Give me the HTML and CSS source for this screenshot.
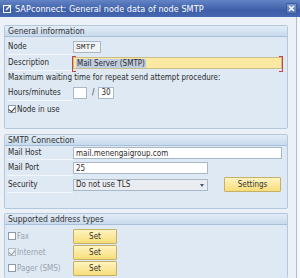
FILE: index.html
```html
<!DOCTYPE html>
<html>
<head>
<meta charset="utf-8">
<link rel="stylesheet" href="styles.css">
</head>
<body>
<div class="window">
  <div class="titlebar">
    <svg class="ticon" width="9" height="9" viewBox="0 0 9 9"><rect x="0.5" y="1.5" width="7" height="7" fill="none" stroke="#fff" stroke-width="1"/><path d="M3 6 L8 1" stroke="#fff" stroke-width="1.2"/></svg>
    <span class="ttext">SAPconnect: General node data of node SMTP</span>
    <span class="close"><svg width="7" height="7" viewBox="0 0 7 7"><path d="M1 1 L6 6 M6 1 L1 6" stroke="#fff" stroke-width="1.5"/></svg></span>
  </div>
  <div class="content">
    <div class="group g1">
      <div class="ghead">General information</div>
      <div class="gbody">
        <div class="row r-node">
          <span class="label">Node</span>
          <span class="field ro">SMTP</span>
        </div>
        <div class="row r-desc">
          <span class="label">Description</span>
          <span class="field yellow req"><span class="sel">Mail Server (SMTP)</span></span>
        </div>
        <div class="textline">Maximum waiting time for repeat send attempt procedure:</div>
        <div class="row r-hours">
          <span class="label">Hours/minutes</span>
          <span class="field small"></span>
          <span class="slash">/</span>
          <span class="field min">30</span>
        </div>
        <div class="checkrow"><span class="cb on"></span><span>Node in use</span></div>
      </div>
    </div>
    <div class="group g2">
      <div class="ghead">SMTP Connection</div>
      <div class="gbody">
        <div class="row r-host">
          <span class="label">Mail Host</span>
          <span class="field wide">mail.menengaigroup.com</span>
        </div>
        <div class="row r-port">
          <span class="label">Mail Port</span>
          <span class="field mid">25</span>
        </div>
        <div class="row r-sec">
          <span class="label">Security</span>
          <span class="field mid dd">Do not use TLS<span class="arrow"></span></span>
          <span class="btn settings">Settings</span>
        </div>
      </div>
    </div>
    <div class="group g3">
      <div class="ghead">Supported address types</div>
      <div class="gbody">
        <div class="row">
          <span class="clabel dis"><span class="cb"></span>Fax</span>
          <span class="btn set">Set</span>
        </div>
        <div class="row">
          <span class="clabel dis"><span class="cb on dis"></span>Internet</span>
          <span class="btn set">Set</span>
        </div>
        <div class="row">
          <span class="clabel dis"><span class="cb"></span>Pager (SMS)</span>
          <span class="btn set">Set</span>
        </div>
      </div>
    </div>
  </div>
</div>
</body>
</html>
```
FILE: styles.css
```css
* { box-sizing: border-box; }
html, body { margin: 0; padding: 0; }
body {
  width: 300px;
  height: 278px;
  overflow: hidden;
  background: #f4f7fb;
  font-family: "DejaVu Sans Condensed", "DejaVu Sans", sans-serif;
  font-stretch: condensed;
  font-size: 8px;
  color: #2b2b2b;
}
.window { width: 300px; height: 278px; display: flex; flex-direction: column; }
.titlebar {
  height: 17px;
  flex: none;
  background: linear-gradient(#6384c6, #3d5fa8 60%, #4568b0);
  display: flex;
  align-items: center;
  padding: 0 3px 0 3px;
  color: #fff;
  font-size: 9px;
}
.ticon { flex: none; margin-right: 3px; }
.ttext { flex: 1; letter-spacing: 0.05px; }
.close {
  width: 11px; height: 11px;
  background: linear-gradient(#7d97cf, #5775b6);
  border: 1px solid #3c5a9c;
  border-radius: 1px;
  display: flex; align-items: center; justify-content: center;
}
.content {
  flex: 1;
  background: #ebf1f7;
  border-right: 1px solid #aebfd4;
  margin-right: 3px;
  padding: 8px 8px 0 4px;
  display: flex;
  flex-direction: column;
}
.group {
  border: 1px solid #b3c7dd;
  background: #dfe9f3;
  border-radius: 2px;
  flex: none;
}
.g2 { margin-top: 5px; }
.g3 { margin-top: 4px; flex: 1; border-bottom: none; }
.ghead {
  height: 11px;
  background: linear-gradient(#e2ecf6, #c8daed);
  border-bottom: 1px solid #a8bfd9;
  padding-left: 3px;
  line-height: 10px;
  font-size: 8.5px;
  color: #333;
}
.gbody { padding: 0 2px; }
.g1 .gbody { height: 91px; padding-top: 1px; }
.g2 .gbody { height: 62px; padding-top: 0; }
.g3 .gbody { padding-top: 3px; }
.row {
  height: 16px;
  display: flex;
  align-items: center;
}
.r-node { height: 17px; }
.r-desc { height: 16px; }
.r-hours { height: 17px; }
.r-host { height: 14px; }
.r-port { height: 16px; }
.r-sec { height: 17px; }
.label {
  width: 66px;
  flex: none;
  align-self: stretch;
  display: flex;
  align-items: center;
  padding-left: 1px;
  border-bottom: 1px solid #f3f7fb;
}
.field {
  height: 12px;
  background: #fff;
  border: 1px solid #a9b8c9;
  display: flex;
  align-items: center;
  padding-left: 2px;
  white-space: nowrap;
  position: relative;
}
.ro {
  width: 28px;
  background: #f1f3f5;
  font-family: "Liberation Mono", monospace;
  font-size: 8px;
  color: #333;
}
.yellow {
  width: 209px;
  background: #fbe9a2;
  border-color: #c8bd8c;
}
.sel { background: #c0cde0; padding: 0 1px; }
.req::before, .req::after {
  content: "";
  position: absolute;
  left: -2px;
  width: 3px;
  height: 14px;
  top: -2px;
  border-top: 1px solid #d04040;
  border-bottom: 1px solid #d04040;
  border-left: 1px solid #d04040;
}
.req::after {
  left: auto;
  right: -2px;
  border-left: none;
  border-right: 1px solid #d04040;
}
.textline { height: 13px; display: flex; align-items: center; padding-left: 1px; }
.small { width: 14px; }
.slash { margin: 0 4px 0 5px; }
.min { width: 16px; }
.checkrow { height: 16px; display: flex; align-items: center; padding-left: 1px; }
.cb {
  width: 8px; height: 8px;
  border: 1px solid #8e9aab;
  background: #fff;
  margin-right: 1px;
  position: relative;
  flex: none;
}
.cb.on::after {
  content: "";
  position: absolute;
  left: 1px; top: 0px;
  width: 3px; height: 5px;
  border-right: 1px solid #333;
  border-bottom: 1px solid #333;
  transform: rotate(40deg);
}
.cb.dis { border-color: #b4bcc6; background: #f2f4f6; }
.cb.dis::after { border-color: #8f98a4; }
.wide { width: 209px; }
.mid { width: 135px; }
.dd { background: #e9edf2; position: relative; }
.arrow {
  position: absolute;
  right: 3px; top: 4px;
  border-left: 2.5px solid transparent;
  border-right: 2.5px solid transparent;
  border-top: 3px solid #40577a;
}
.btn {
  height: 15px;
  display: flex;
  align-items: center;
  justify-content: center;
  background: linear-gradient(#fff4c2, #f7dd78);
  border: 1px solid #c6b06a;
  border-radius: 1px;
  color: #333;
}
.settings { width: 57px; margin-left: 16px; }
.set { width: 44px; }
.clabel {
  width: 66px; flex: none;
  display: flex; align-items: center;
  padding-left: 1px;
}
.dis { color: #9aa3ae; }
```
